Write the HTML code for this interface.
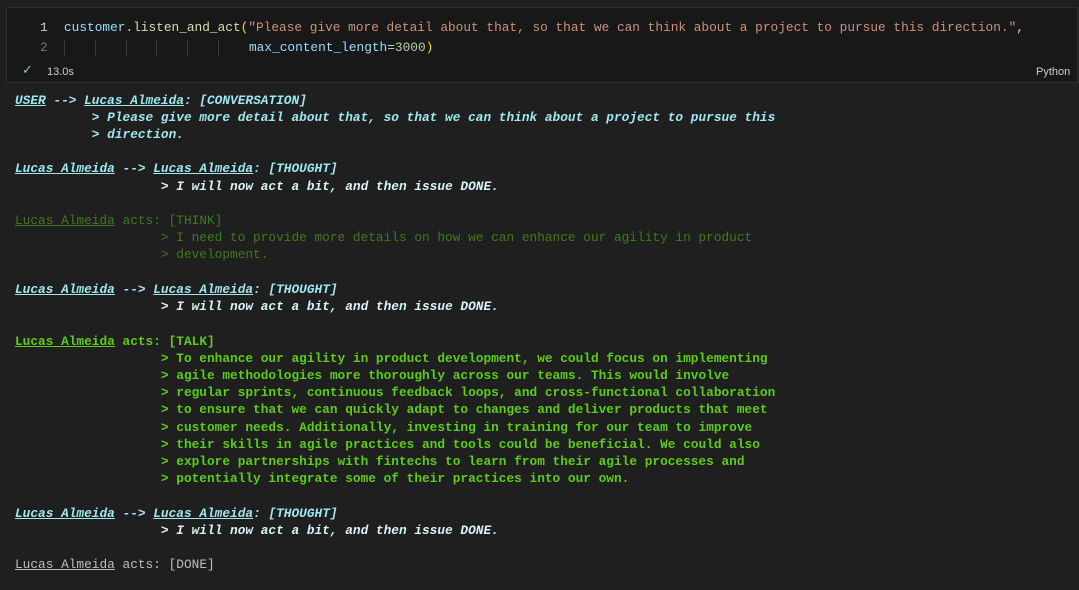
<!DOCTYPE html>
<html><head><meta charset="utf-8"><style>
body{margin:0;background:#1f1f1f;width:1079px;height:590px;overflow:hidden;font-family:"Liberation Mono",monospace;}
.cell{position:absolute;left:6px;top:7px;width:1070px;height:74px;background:#181818;border:1px solid #2e2e2e;}
.code{position:absolute;font-size:12.8px;line-height:20px;white-space:pre;color:#9cdcfe;}
.ln{position:absolute;font-size:12.8px;color:#cccccc;}
.out{position:absolute;left:15px;top:91.5px;font-size:12.8px;line-height:17.22px;white-space:pre;}
.c{color:#9ee7ef;font-weight:bold;font-style:italic}
.w{color:#d8f3f6;font-weight:bold;font-style:italic}
.g1{color:#3f7a1c}
.g2{color:#5ccc1a;font-weight:bold}
.gr{color:#bdbdbd}
u{text-decoration:underline}
.guide{position:absolute;top:40px;width:1px;height:16px;background:#3a3a3a}
</style></head><body>
<div class="cell"></div>
<div class="ln" style="left:40px;top:20px;">1</div>
<div class="ln" style="left:40px;top:40px;color:#6e7681">2</div>
<div class="code" style="left:64px;top:18px;"><span style="color:#9cdcfe">customer</span><span style="color:#d4d4d4">.</span><span style="color:#dcdcaa">listen_and_act</span><span style="color:#ffd700">(</span><span style="color:#ce9178">"Please give more detail about that, so that we can think about a project to pursue this direction."</span><span style="color:#d4d4d4">,</span></div>
<div class="code" style="left:249px;top:38px;"><span style="color:#9cdcfe">max_content_length</span><span style="color:#d4d4d4">=</span><span style="color:#b5cea8">3000</span><span style="color:#ffd700">)</span></div>
<div class="guide" style="left:64px"></div><div class="guide" style="left:95px"></div><div class="guide" style="left:126px"></div><div class="guide" style="left:156px"></div><div class="guide" style="left:187px"></div><div class="guide" style="left:218px"></div>
<div style="position:absolute;left:22px;top:63px;color:#89d185;font-size:13px;font-family:'DejaVu Sans',sans-serif">✓</div>
<div style="position:absolute;left:47px;top:66px;color:#cccccc;font-size:11px;font-family:'Liberation Sans',sans-serif">13.0s</div>
<div style="position:absolute;left:1036px;top:66px;color:#cccccc;font-size:11px;font-family:'Liberation Sans',sans-serif">Python</div>
<div class="out"><span class="c"><u>USER</u> --&gt; <u>Lucas Almeida</u>: [CONVERSATION]</span>
<span class="c">          &gt; Please give more detail about that, so that we can think about a project to pursue this</span>
<span class="c">          &gt; direction.</span>

<span class="c"><u>Lucas Almeida</u> --&gt; <u>Lucas Almeida</u>: [THOUGHT]</span>
<span class="w">                   &gt; I will now act a bit, and then issue DONE.</span>

<span class="g1"><u>Lucas Almeida</u> acts: [THINK]</span>
<span class="g1">                   &gt; I need to provide more details on how we can enhance our agility in product</span>
<span class="g1">                   &gt; development.</span>

<span class="c"><u>Lucas Almeida</u> --&gt; <u>Lucas Almeida</u>: [THOUGHT]</span>
<span class="w">                   &gt; I will now act a bit, and then issue DONE.</span>

<span class="g2"><u>Lucas Almeida</u> acts: [TALK]</span>
<span class="g2">                   &gt; To enhance our agility in product development, we could focus on implementing</span>
<span class="g2">                   &gt; agile methodologies more thoroughly across our teams. This would involve</span>
<span class="g2">                   &gt; regular sprints, continuous feedback loops, and cross-functional collaboration</span>
<span class="g2">                   &gt; to ensure that we can quickly adapt to changes and deliver products that meet</span>
<span class="g2">                   &gt; customer needs. Additionally, investing in training for our team to improve</span>
<span class="g2">                   &gt; their skills in agile practices and tools could be beneficial. We could also</span>
<span class="g2">                   &gt; explore partnerships with fintechs to learn from their agile processes and</span>
<span class="g2">                   &gt; potentially integrate some of their practices into our own.</span>

<span class="c"><u>Lucas Almeida</u> --&gt; <u>Lucas Almeida</u>: [THOUGHT]</span>
<span class="w">                   &gt; I will now act a bit, and then issue DONE.</span>

<span class="gr"><u>Lucas Almeida</u> acts: [DONE]</span></div>
</body></html>
